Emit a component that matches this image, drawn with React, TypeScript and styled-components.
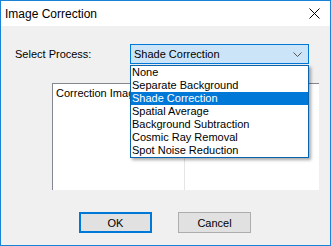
import React from "react";
import styled, { createGlobalStyle } from "styled-components";

const Global = createGlobalStyle`
  html, body { margin: 0; padding: 0; background: #f0f0f0; }
  * { box-sizing: border-box; }
`;

const Dialog = styled.div`
  width: 331px;
  height: 246px;
  border: 1px solid #1883d7;
  background: #f0f0f0;
  display: flex;
  flex-direction: column;
  font-family: "Liberation Sans", Arial, sans-serif;
  font-size: 11px;
  color: #000;
`;

const TitleBar = styled.div`
  height: 25px;
  background: #fff;
  display: flex;
  align-items: center;
  justify-content: space-between;
  padding: 0 10px 0 4px;
  font-size: 12px;
`;

const CloseIcon = styled.svg`
  width: 11px;
  height: 11px;
`;

const Body = styled.div`
  flex: 1;
  display: flex;
  flex-direction: column;
  padding: 18px 11px 0 14px;
`;

const ProcessRow = styled.div`
  display: flex;
  align-items: center;
  height: 20px;
`;

const Label = styled.span`
  width: 115px;
`;

const ComboWrap = styled.div`
  position: relative;
  width: 179px;
`;

const Combo = styled.div`
  height: 20px;
  border: 1px solid #0078d7;
  background: #cce4f7;
  display: flex;
  align-items: center;
  justify-content: space-between;
  padding: 0 6px 0 3px;
`;

const DropList = styled.ul`
  position: absolute;
  top: 21px;
  left: 0;
  width: 179px;
  margin: 0;
  padding: 0;
  list-style: none;
  background: #fff;
  border: 1px solid #0a64ad;
  box-shadow: 2px 2px 3px rgba(0, 0, 0, 0.35);
  z-index: 5;
`;

const Item = styled.li<{ $selected?: boolean }>`
  height: 13px;
  line-height: 13px;
  padding-left: 1px;
  white-space: nowrap;
  background: ${(p) => (p.$selected ? "#0078d7" : "transparent")};
  color: ${(p) => (p.$selected ? "#fff" : "#000")};
`;

const ListView = styled.div`
  margin: 19px 0 0 37px;
  width: 267px;
  height: 107px;
  background: #fff;
  border-top: 1px solid #828790;
  border-left: 1px solid #828790;
  display: grid;
  grid-template-columns: 132px 1fr;
`;

const Column = styled.div<{ $last?: boolean }>`
  border-right: ${(p) => (p.$last ? "none" : "1px solid #e5e5e5")};
  padding: 3px 0 0 3px;
  white-space: nowrap;
  overflow: hidden;
`;

const ButtonRow = styled.div`
  display: flex;
  gap: 26px;
  margin: 22px 0 0 64px;
`;

const Button = styled.button<{ $default?: boolean }>`
  width: 73px;
  height: 21px;
  background: #e1e1e1;
  border: ${(p) => (p.$default ? "2px solid #0078d7" : "1px solid #adadad")};
  font-family: inherit;
  font-size: 11px;
  color: #000;
  padding: 0;
`;

const items = [
  "None",
  "Separate Background",
  "Shade Correction",
  "Spatial Average",
  "Background Subtraction",
  "Cosmic Ray Removal",
  "Spot Noise Reduction",
];

export default function App() {
  return (
    <>
      <Global />
      <Dialog>
        <TitleBar>
          <span>Image Correction</span>
          <CloseIcon viewBox="0 0 11 11">
            <path d="M0.5 0.5 L10.5 10.5 M10.5 0.5 L0.5 10.5" stroke="#000" strokeWidth="1" />
          </CloseIcon>
        </TitleBar>
        <Body>
          <ProcessRow>
            <Label>Select Process:</Label>
            <ComboWrap>
              <Combo>
                <span>Shade Correction</span>
                <svg width="9" height="5" viewBox="0 0 9 5">
                  <path d="M0.5 0.5 L4.5 4.5 L8.5 0.5" fill="none" stroke="#555" strokeWidth="1" />
                </svg>
              </Combo>
              <DropList>
                {items.map((it) => (
                  <Item key={it} $selected={it === "Shade Correction"}>
                    {it}
                  </Item>
                ))}
              </DropList>
            </ComboWrap>
          </ProcessRow>
          <ListView>
            <Column>Correction Image</Column>
            <Column $last />
          </ListView>
          <ButtonRow>
            <Button $default>OK</Button>
            <Button>Cancel</Button>
          </ButtonRow>
        </Body>
      </Dialog>
    </>
  );
}
